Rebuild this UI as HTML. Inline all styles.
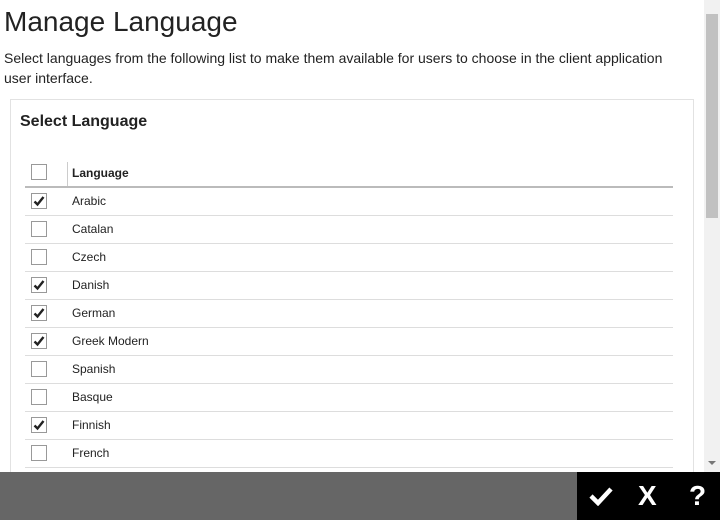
<!DOCTYPE html>
<html><head><style>
body{margin:0;width:720px;height:520px;overflow:hidden;font-family:"Liberation Sans",Arial,sans-serif;background:#fff;position:relative;color:#222}
h1{position:absolute;left:4px;top:6px;margin:0;font-size:28px;font-weight:normal;color:#222}
.desc{position:absolute;left:4px;top:48px;width:680px;font-size:14px;line-height:20px;color:#222}
.panel{position:absolute;left:10px;top:99px;width:682px;height:400px;border:1px solid #e2e2e2;border-bottom:none}
.title{position:absolute;left:9px;top:13px;font-size:16px;font-weight:bold}
.tbl{position:absolute;left:14px;top:60px;width:648px}
.row{height:27px;border-bottom:1px solid #ddd;position:relative;font-size:12px}
.row.h{height:26px;border-bottom:2px solid #bbb;font-weight:bold}
.row.h .sep{position:absolute;left:42px;top:2px;height:24px;border-left:1px solid #ccc}
.cb{position:absolute;left:6px;top:5px;width:14px;height:14px;border:1px solid #999;background:#fff}
.row.h .cb{top:4px}
.cb svg{position:absolute;left:1px;top:1px}
.lbl{position:absolute;left:47px;top:6px}
.row.h .lbl{top:6px}
.sb{position:absolute;right:0;top:0;width:16px;height:472px;background:#f1f1f1}
.thumb{position:absolute;left:2px;top:14px;width:12px;height:204px;background:#c1c1c1}
.bar{position:absolute;left:0;top:472px;width:720px;height:48px;background:#666}
.blk{position:absolute;left:577px;top:0;width:143px;height:48px;background:#000;color:#fff;font-weight:bold;font-size:28px}
.blk span{position:absolute;top:8px}
</style></head><body>
<h1>Manage Language</h1>
<div class="desc">Select languages from the following list to make them available for users to choose in the client application user interface.</div>
<div class="panel"><div class="title">Select Language</div>
<div class="tbl">
<div class="row h"><div class="cb"></div><div class="sep"></div><div class="lbl">Language</div></div>
<div class="row"><div class="cb"><svg width="12" height="12"><path d="M1.5 6.5L4.5 9.5L10.5 2" stroke="#222" stroke-width="2.4" fill="none"/></svg></div><div class="lbl">Arabic</div></div>
<div class="row"><div class="cb"></div><div class="lbl">Catalan</div></div>
<div class="row"><div class="cb"></div><div class="lbl">Czech</div></div>
<div class="row"><div class="cb"><svg width="12" height="12"><path d="M1.5 6.5L4.5 9.5L10.5 2" stroke="#222" stroke-width="2.4" fill="none"/></svg></div><div class="lbl">Danish</div></div>
<div class="row"><div class="cb"><svg width="12" height="12"><path d="M1.5 6.5L4.5 9.5L10.5 2" stroke="#222" stroke-width="2.4" fill="none"/></svg></div><div class="lbl">German</div></div>
<div class="row"><div class="cb"><svg width="12" height="12"><path d="M1.5 6.5L4.5 9.5L10.5 2" stroke="#222" stroke-width="2.4" fill="none"/></svg></div><div class="lbl">Greek Modern</div></div>
<div class="row"><div class="cb"></div><div class="lbl">Spanish</div></div>
<div class="row"><div class="cb"></div><div class="lbl">Basque</div></div>
<div class="row"><div class="cb"><svg width="12" height="12"><path d="M1.5 6.5L4.5 9.5L10.5 2" stroke="#222" stroke-width="2.4" fill="none"/></svg></div><div class="lbl">Finnish</div></div>
<div class="row"><div class="cb"></div><div class="lbl">French</div></div>
</div></div>
<div class="sb"><div class="thumb"></div><svg style="position:absolute;left:4px;top:460px" width="8" height="6"><path d="M0 1H8L4 5Z" fill="#777"/></svg></div>
<div class="bar"><div class="blk">
<svg style="position:absolute;left:12px;top:14px" width="24" height="20"><path d="M2 10L9 17L22 3" stroke="#fff" stroke-width="4.5" fill="none"/></svg>
<span style="left:61px">X</span><span style="left:112px">?</span></div></div>
</body></html>
